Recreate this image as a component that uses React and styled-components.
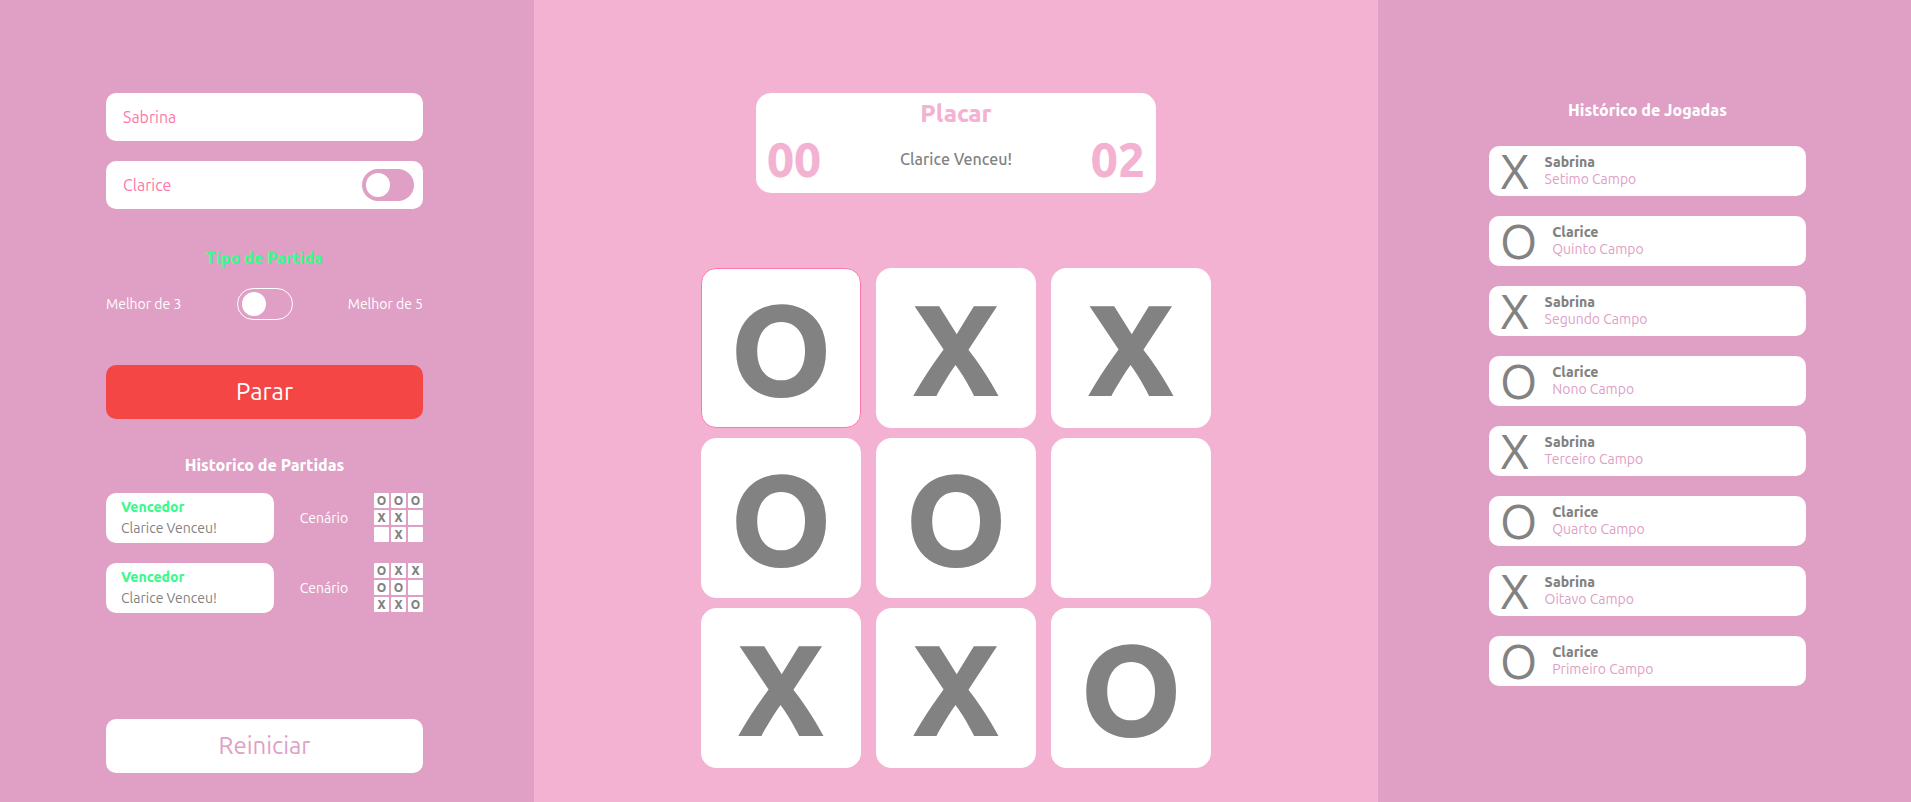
import React, { useState } from "react";
import styled, { createGlobalStyle, css } from "styled-components";

const colors = {
  side: "#e0a0c5",
  main: "#f4b2d3",
  accent: "#ff78a8",
  green: "#3cfa8c",
  red: "#f54646",
  grey: "#828282",
};

const GlobalStyle = createGlobalStyle`
  * { box-sizing: border-box; margin: 0; padding: 0; }
  body, input, button {
    font-family: Ubuntu, "Noto Sans", sans-serif;
    font-weight: 450;
  }
`;

const Page = styled.div`
  display: grid;
  grid-template-columns: 534fr 844fr 533fr;
  min-height: 100vh;
  background: ${colors.main};
`;

const Sidebar = styled.aside`
  display: flex;
  flex-direction: column;
  background: ${colors.side};
  padding: ${(p) => (p.$end ? "93px 105px 29px 111px" : "93px 111px 29px 106px")};
`;

const Main = styled.main`
  display: flex;
  flex-direction: column;
  align-items: center;
  gap: 75px;
  padding: 93px 0 34px;
`;

const Players = styled.div`
  display: flex;
  flex-direction: column;
  gap: 20px;
`;

const Field = styled.div`
  display: flex;
  align-items: center;
  height: 48px;
  padding: 0 9px 0 17px;
  border-radius: 10px;
  background: #fff;
`;

const NameInput = styled.input`
  flex: 1;
  min-width: 0;
  border: 0;
  outline: 0;
  background: transparent;
  color: ${colors.accent};
  font-size: 16px;
`;

const Switch = styled.input`
  appearance: none;
  display: flex;
  align-items: center;
  flex: none;
  width: ${(p) => (p.$outlined ? "56px" : "52px")};
  height: 32px;
  padding: 0 4px;
  border: ${(p) => (p.$outlined ? "1px solid #fff" : "0")};
  border-radius: 16px;
  background: ${colors.side};
  cursor: pointer;

  &::before {
    content: "";
    width: 24px;
    height: 24px;
    border-radius: 50%;
    background: #fff;
  }
  &:checked {
    justify-content: flex-end;
  }
`;

const Heading = styled.h2`
  font-size: 16px;
  line-height: 20px;
  font-weight: 800;
  text-align: center;
  color: ${(p) => (p.$green ? colors.green : "#fff")};
`;

const MatchType = styled.section`
  display: flex;
  flex-direction: column;
  gap: 20px;
  margin: 39px 0 45px;
`;

const MatchOptions = styled.div`
  display: flex;
  align-items: center;
  justify-content: space-between;
  color: #fff;
  font-size: 14px;
`;

const ActionButton = styled.button`
  flex: none;
  height: 54px;
  padding-bottom: 2px;
  border: 0;
  border-radius: 10px;
  font-size: 24px;
  cursor: pointer;
  ${(p) =>
    p.$danger
      ? css`
          background: ${colors.red};
          color: #fff;
        `
      : css`
          margin-top: auto;
          background: #fff;
          color: ${colors.side};
        `}
`;

const Matches = styled.section`
  display: flex;
  flex-direction: column;
  gap: 18px;
  margin: 36px 0 40px;
`;

const List = styled.ul`
  display: flex;
  flex-direction: column;
  gap: 20px;
  list-style: none;
`;

const MatchRow = styled.li`
  display: flex;
  align-items: center;
  justify-content: space-between;
  height: 50px;
  color: #fff;
  font-size: 14px;
`;

const WinnerCard = styled.div`
  width: 168px;
  height: 50px;
  padding: 4px 15px;
  border-radius: 10px;
  background: #fff;
  color: ${colors.grey};
  line-height: 21px;
`;

const WinnerLabel = styled.strong`
  display: block;
  font-weight: 800;
  color: ${colors.green};
`;

const MiniBoard = styled.div`
  align-self: flex-start;
  display: grid;
  grid-template-columns: repeat(3, 15px);
  grid-auto-rows: 15px;
  gap: 2px;
`;

const MiniCell = styled.span`
  border-radius: 1px;
  background: #fff;
  color: ${colors.grey};
  font-size: 12px;
  line-height: 15px;
  font-weight: 800;
  text-align: center;
`;

const ScoreCard = styled.section`
  display: flex;
  flex-direction: column;
  width: 400px;
  max-width: 100%;
  height: 100px;
  padding: 5px 11px;
  border-radius: 15px;
  background: #fff;
  color: ${colors.main};
`;

const ScoreTitle = styled.h1`
  font-size: 24px;
  line-height: 32px;
  font-weight: 800;
  text-align: center;
`;

const ScoreRow = styled.div`
  display: flex;
  align-items: center;
  justify-content: space-between;
`;

const Score = styled.span`
  font-size: 48px;
  line-height: 58px;
  font-weight: 800;
`;

const ScoreMessage = styled.p`
  color: ${colors.grey};
  font-size: 16px;
  line-height: 20px;
  font-weight: 550;
`;

const Board = styled.div`
  display: grid;
  grid-template-columns: repeat(3, 160px);
  grid-auto-rows: 160px;
  gap: 10px 15px;
`;

const Cell = styled.button`
  border: 1px solid ${(p) => (p.$active ? colors.accent : "#fff")};
  border-radius: 15px;
  background: #fff;
  color: ${colors.grey};
  font-size: 130px;
  line-height: 128px;
  font-weight: 800;
  cursor: pointer;
`;

const Moves = styled.section`
  display: flex;
  flex-direction: column;
  gap: 26px;
  padding-top: 7px;
`;

const MoveRow = styled.li`
  display: flex;
  align-items: center;
  gap: 15px;
  height: 50px;
  padding: 0 11px;
  border-radius: 10px;
  background: #fff;
`;

const MoveSymbol = styled.span`
  color: ${colors.grey};
  font-size: 48px;
  line-height: 50px;
`;

const MoveInfo = styled.div`
  color: ${colors.side};
  font-size: 14px;
  line-height: 17px;
`;

const PlayerName = styled.strong`
  display: block;
  font-weight: 800;
  color: ${colors.grey};
`;

const board = ["O", "X", "X", "O", "O", "", "X", "X", "O"];

const matches = [
  { id: 1, cells: ["O", "O", "O", "X", "X", "", "", "X", ""] },
  { id: 2, cells: board },
];

const moves = [
  ["X", "Sabrina", "Setimo Campo"],
  ["O", "Clarice", "Quinto Campo"],
  ["X", "Sabrina", "Segundo Campo"],
  ["O", "Clarice", "Nono Campo"],
  ["X", "Sabrina", "Terceiro Campo"],
  ["O", "Clarice", "Quarto Campo"],
  ["X", "Sabrina", "Oitavo Campo"],
  ["O", "Clarice", "Primeiro Campo"],
];

export default function App() {
  const [first, setFirst] = useState("Sabrina");
  const [second, setSecond] = useState("Clarice");

  return (
    <>
      <GlobalStyle />
      <Page>
        <Sidebar>
          <Players>
            <Field>
              <NameInput aria-label="Jogador 1" value={first} onChange={(e) => setFirst(e.target.value)} />
            </Field>
            <Field>
              <NameInput aria-label="Jogador 2" value={second} onChange={(e) => setSecond(e.target.value)} />
              <Switch type="checkbox" aria-label="Jogar contra o computador" />
            </Field>
          </Players>
          <MatchType>
            <Heading $green>Tipo de Partida</Heading>
            <MatchOptions>
              <label htmlFor="match-type">Melhor de 3</label>
              <Switch id="match-type" type="checkbox" $outlined />
              <label htmlFor="match-type">Melhor de 5</label>
            </MatchOptions>
          </MatchType>
          <ActionButton $danger>Parar</ActionButton>
          <Matches>
            <Heading>Historico de Partidas</Heading>
            <List>
              {matches.map((match) => (
                <MatchRow key={match.id}>
                  <WinnerCard>
                    <WinnerLabel>Vencedor</WinnerLabel>
                    Clarice Venceu!
                  </WinnerCard>
                  <span>Cenário</span>
                  <MiniBoard>
                    {match.cells.map((mark, i) => (
                      <MiniCell key={i}>{mark}</MiniCell>
                    ))}
                  </MiniBoard>
                </MatchRow>
              ))}
            </List>
          </Matches>
          <ActionButton>Reiniciar</ActionButton>
        </Sidebar>

        <Main>
          <ScoreCard>
            <ScoreTitle>Placar</ScoreTitle>
            <ScoreRow>
              <Score>00</Score>
              <ScoreMessage>Clarice Venceu!</ScoreMessage>
              <Score>02</Score>
            </ScoreRow>
          </ScoreCard>
          <Board>
            {board.map((mark, i) => (
              <Cell key={i} $active={i === 0} aria-label={`Campo ${i + 1}`}>
                {mark}
              </Cell>
            ))}
          </Board>
        </Main>

        <Sidebar $end>
          <Moves>
            <Heading>Histórico de Jogadas</Heading>
            <List>
              {moves.map(([mark, player, field]) => (
                <MoveRow key={field}>
                  <MoveSymbol>{mark}</MoveSymbol>
                  <MoveInfo>
                    <PlayerName>{player}</PlayerName>
                    {field}
                  </MoveInfo>
                </MoveRow>
              ))}
            </List>
          </Moves>
        </Sidebar>
      </Page>
    </>
  );
}
